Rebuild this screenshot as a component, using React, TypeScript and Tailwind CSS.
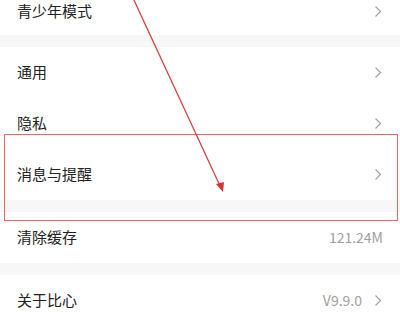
import React from 'react';

const font = { fontFamily: '"Noto Sans CJK SC", "Noto Sans", sans-serif' };

function Chevron() {
  return (
    <svg width="8" height="13" viewBox="0 0 8 13" className="shrink-0">
      <path d="M1.5 1.5 L6.5 6.5 L1.5 11.5" fill="none" stroke="#a3a3a3" strokeWidth="1.2" />
    </svg>
  );
}

function Row({ label, value, arrow = true, h = 'h-[51px]', pr = 'pr-[18px]' }: { label: string; value?: string; arrow?: boolean; h?: string; pr?: string }) {
  return (
    <div className={`flex items-center justify-between bg-white pl-[17px] ${pr} ${h}`}>
      <span className="text-[15px] text-[#222]">{label}</span>
      <div className="flex items-center gap-[12px]">
        {value && <span className="text-[14px] text-[#9e9e9e]">{value}</span>}
        {arrow && <Chevron />}
      </div>
    </div>
  );
}

const Gap = () => <div className="h-[12px] bg-[#f7f7f7]" />;

export default function App() {
  return (
    <div className="relative w-[400px] h-[324px] overflow-hidden bg-white" style={font}>
      <div className="flex flex-col -mt-[12px]">
        <Row label="青少年模式" h="h-[47px]" />
        <Gap />
        <Row label="通用" />
        <Row label="隐私" />
        <Row label="消息与提醒" />
        <Gap />
        <Row label="清除缓存" value="121.24M" arrow={false} pr="pr-[17px]" />
        <Gap />
        <Row label="关于比心" value="V9.9.0" />
      </div>

      {/* annotation overlay */}
      <div className="absolute left-[4px] top-[134px] w-[394px] h-[87px] border border-[#e46a6a]" />
      <svg className="absolute inset-0 pointer-events-none" width="400" height="324">
        <line x1="133" y1="-2" x2="221" y2="188" stroke="#d94040" strokeWidth="1.3" />
        <path d="M216 184 L223 192 L224 182 Z" fill="#d93030" />
      </svg>
    </div>
  );
}
